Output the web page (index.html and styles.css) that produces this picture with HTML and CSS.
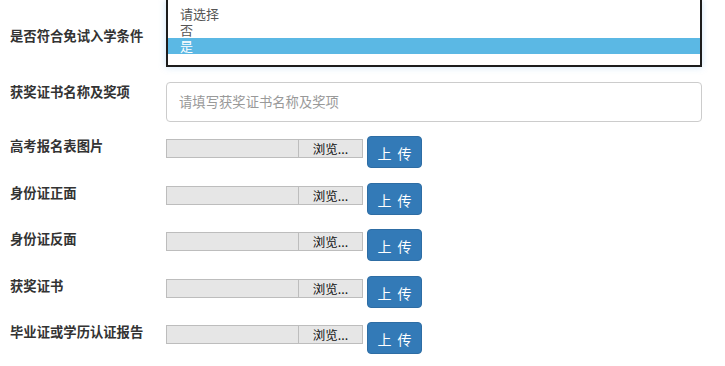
FILE: index.html
```html
<!DOCTYPE html>
<html lang="zh-CN">
<head>
<meta charset="utf-8">
<title>报名信息</title>
<link rel="stylesheet" href="styles.css">
</head>
<body>
<form class="form">
  <div class="row row-select">
    <label class="lbl lbl-select">是否符合免试入学条件</label>
    <div class="listbox">
      <div class="opt">请选择</div>
      <div class="opt">否</div>
      <div class="opt opt-active">是</div>
    </div>
  </div>
  <div class="row">
    <label class="lbl">获奖证书名称及奖项</label>
    <input class="text-input" type="text" placeholder="请填写获奖证书名称及奖项">
  </div>
  <div class="row">
    <label class="lbl">高考报名表图片</label>
    <div class="file-group">
      <div class="file"><span class="file-path"></span><span class="file-btn">浏览...</span></div>
      <button type="button" class="upload">上 传</button>
    </div>
  </div>
  <div class="row">
    <label class="lbl">身份证正面</label>
    <div class="file-group">
      <div class="file"><span class="file-path"></span><span class="file-btn">浏览...</span></div>
      <button type="button" class="upload">上 传</button>
    </div>
  </div>
  <div class="row">
    <label class="lbl">身份证反面</label>
    <div class="file-group">
      <div class="file"><span class="file-path"></span><span class="file-btn">浏览...</span></div>
      <button type="button" class="upload">上 传</button>
    </div>
  </div>
  <div class="row">
    <label class="lbl">获奖证书</label>
    <div class="file-group">
      <div class="file"><span class="file-path"></span><span class="file-btn">浏览...</span></div>
      <button type="button" class="upload">上 传</button>
    </div>
  </div>
  <div class="row">
    <label class="lbl">毕业证或学历认证报告</label>
    <div class="file-group">
      <div class="file"><span class="file-path"></span><span class="file-btn">浏览...</span></div>
      <button type="button" class="upload">上 传</button>
    </div>
  </div>
</form>
</body>
</html>
```

FILE: styles.css
```css
* { box-sizing: border-box; }

html, body {
  margin: 0;
  background: #fff;
  font-family: "Noto Sans CJK SC", "Noto Sans", sans-serif;
  color: #333;
}

.form {
  display: flex;
  flex-direction: column;
  gap: 14.5px;
  padding: 0 23px 0 10px;
}

.row {
  display: grid;
  grid-template-columns: 156px 1fr;
  align-items: start;
}

.row-select { align-items: center; }

.lbl {
  font-size: 13.33px;
  font-weight: bold;
  line-height: 20px;
  color: #333;
}

.lbl-select { padding-top: 5px; }

.listbox {
  height: 67px;
  border: 2px solid #1c1c1c;
  border-top: 0;
  padding-top: 6px;
  background: #fff;
  box-shadow: 0 0 7px rgba(102, 175, 233, 0.35);
}

.opt {
  height: 16px;
  line-height: 16px;
  padding-left: 12px;
  font-size: 13px;
  color: #555;
}

.opt-active {
  background: #5bb8e4;
  color: #fff;
}

.text-input {
  display: block;
  width: 100%;
  height: 40px;
  margin: 0;
  padding: 0 12px;
  border: 1px solid #ccc;
  border-radius: 4px;
  font-family: inherit;
  font-size: 13.33px;
  color: #555;
  background: #fff;
  outline: none;
}

.text-input::placeholder { color: #999; }

.file-group {
  display: flex;
  align-items: flex-start;
  gap: 4px;
}

.file {
  display: flex;
  width: 197px;
  height: 19px;
  margin-top: 3px;
  border: 1px solid #bdbdbd;
  background: #e6e6e6;
}

.file-path { flex: 1; }

.file-btn {
  width: 64px;
  border-left: 1px solid #bdbdbd;
  font-size: 12.5px;
  line-height: 17px;
  text-align: center;
  color: #111;
}

.upload {
  width: 55px;
  height: 32px;
  margin: 0;
  padding: 2px 0 0;
  border: 1px solid #2e6da4;
  border-radius: 4px;
  background: #337ab7;
  color: #fff;
  font-family: inherit;
  font-size: 14px;
  line-height: 20px;
  word-spacing: 3px;
}
```
